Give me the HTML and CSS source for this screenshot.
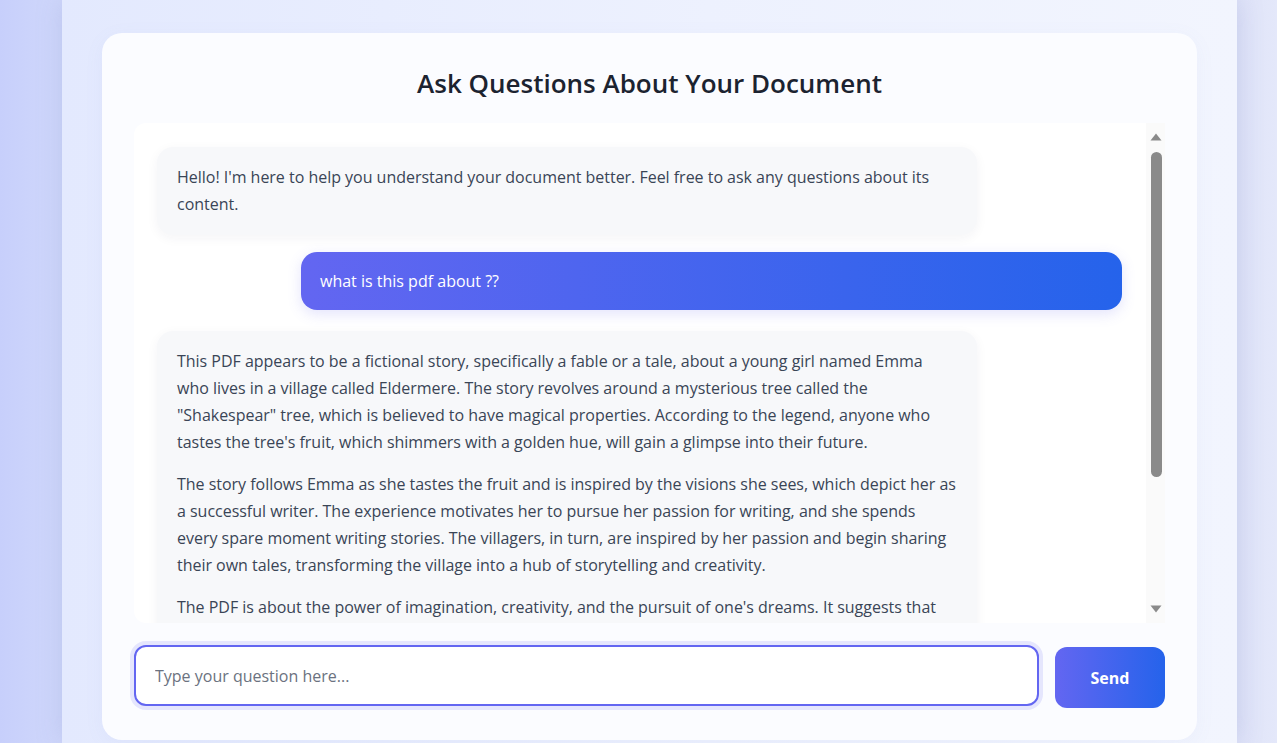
FILE: index.html
```html
<!DOCTYPE html>
<html lang="en">
<head>
<meta charset="utf-8">
<title>Ask Questions About Your Document</title>
<link rel="stylesheet" href="styles.css">
</head>
<body>
<div class="page">
  <main class="shell">
    <section class="card">
      <h2 class="title">Ask Questions About Your Document</h2>
      <div class="chat">
        <div class="messages">
          <div class="msg bot first">
            <p>Hello! I'm here to help you understand your document better. Feel free to ask any questions about its content.</p>
          </div>
          <div class="msg user">what is this pdf about ??</div>
          <div class="msg bot">
            <p>This PDF appears to be a fictional story, specifically a fable or a tale, about a young girl named Emma who lives in a village called Eldermere. The story revolves around a mysterious tree called the "Shakespear" tree, which is believed to have magical properties. According to the legend, anyone who tastes the tree's fruit, which shimmers with a golden hue, will gain a glimpse into their future.</p>
            <p>The story follows Emma as she tastes the fruit and is inspired by the visions she sees, which depict her as a successful writer. The experience motivates her to pursue her passion for writing, and she spends every spare moment writing stories. The villagers, in turn, are inspired by her passion and begin sharing their own tales, transforming the village into a hub of storytelling and creativity.</p>
            <p>The PDF is about the power of imagination, creativity, and the pursuit of one's dreams. It suggests that believing in oneself and following one's passion can inspire others and bring positive change to an entire community.</p>
          </div>
        </div>
        <div class="rail" aria-hidden="true">
          <svg class="arrow" width="12" height="8" viewBox="0 0 12 8"><path d="M6 0.5 L11.5 7.5 L0.5 7.5 Z" fill="#8a8a8a"/></svg>
          <div class="thumb"></div>
          <div class="rail-space"></div>
          <svg class="arrow" width="12" height="8" viewBox="0 0 12 8"><path d="M0.5 0.5 L11.5 0.5 L6 7.5 Z" fill="#8a8a8a"/></svg>
        </div>
      </div>
      <form class="composer">
        <input class="question" type="text" placeholder="Type your question here...">
        <button class="send" type="button">Send</button>
      </form>
    </section>
  </main>
</div>
</body>
</html>
```

FILE: styles.css
```css
* { box-sizing: border-box; }

html, body {
  margin: 0;
  height: 100%;
}

body {
  font-family: "Open Sans", "Noto Sans", sans-serif;
  background: #c8d0fb;
  color: #374151;
  overflow: hidden;
}

.page {
  display: flex;
  height: 100%;
  padding: 0 40px 0 62px;
  background: linear-gradient(90deg, #c7cffb 0%, #d0d8fb 4.8%, #dfe3f8 97%, #e4e8fa 100%);
}

.shell {
  flex: 1;
  padding: 33px 40px 0;
  background: linear-gradient(90deg, #e3e9fe 0%, #edf1fe 55%, #f2f5fe 100%);
  box-shadow: 0 0 24px rgba(120, 130, 200, 0.25);
}

.card {
  background: #fbfcff;
  border-radius: 20px;
  padding: 32px;
  box-shadow: 0 4px 20px rgba(120, 130, 200, 0.06);
}

.title {
  margin: 0 0 22px;
  text-align: center;
  font-size: 26px;
  line-height: 36px;
  font-weight: 600;
  color: #1c2330;
}

.chat {
  display: flex;
  height: 500px;
  background: #ffffff;
  border-radius: 12px 0 0 12px;
  overflow: hidden;
}

.messages {
  flex: 1;
  min-width: 0;
  overflow: hidden;
  padding: 24px 24px 24px 23px;
}

.rail {
  width: 19px;
  flex: none;
  display: flex;
  flex-direction: column;
  align-items: center;
  padding: 10px 0 10px 1px;
  background: #fafafa;
}

.arrow {
  display: block;
  flex: none;
}

.thumb {
  width: 11px;
  height: 325px;
  margin-top: 11px;
  border-radius: 6px;
  background: #8a8a8a;
}

.rail-space { flex: 1; }

.msg {
  max-width: 821px;
  border-radius: 16px;
  font-size: 16px;
}

.bot {
  max-width: 820px;
  background: #f7f8fa;
  padding: 17px 20px;
  box-shadow: 0 3px 12px rgba(30, 40, 80, 0.05);
  margin-bottom: 21px;
}
.bot.first {
  margin-bottom: 17px;
}

.bot p {
  margin: 0 0 15px;
  line-height: 27px;
  letter-spacing: -0.02px;
  color: #3a4556;
}
.bot p:last-child { margin-bottom: 0; }

.user {
  margin-left: auto;
  margin-bottom: 21px;
  padding: 17px 20px 17px 19px;
  line-height: 24px;
  color: #ffffff;
  background: linear-gradient(90deg, #6366f1 0%, #2563eb 100%);
  box-shadow: 0 4px 14px rgba(99, 102, 241, 0.18);
}

.composer {
  display: flex;
  align-items: flex-start;
  gap: 16px;
  margin: 22px 0 0;
}

.question {
  flex: 1;
  height: 61px;
  padding: 0 19px;
  border: 2px solid #6366f1;
  border-radius: 12px;
  font: inherit;
  font-size: 16px;
  color: #374151;
  background: #ffffff;
  outline: none;
  box-shadow: 0 0 0 4px rgba(99, 102, 241, 0.14);
}
.question::placeholder {
  color: #6b7280;
}

.send {
  width: 110px;
  height: 61px;
  margin-top: 2px;
  border: none;
  border-radius: 12px;
  font: inherit;
  font-size: 16px;
  font-weight: 700;
  color: #ffffff;
  background: linear-gradient(90deg, #6366f1 0%, #2563eb 100%);
  cursor: pointer;
}
```
